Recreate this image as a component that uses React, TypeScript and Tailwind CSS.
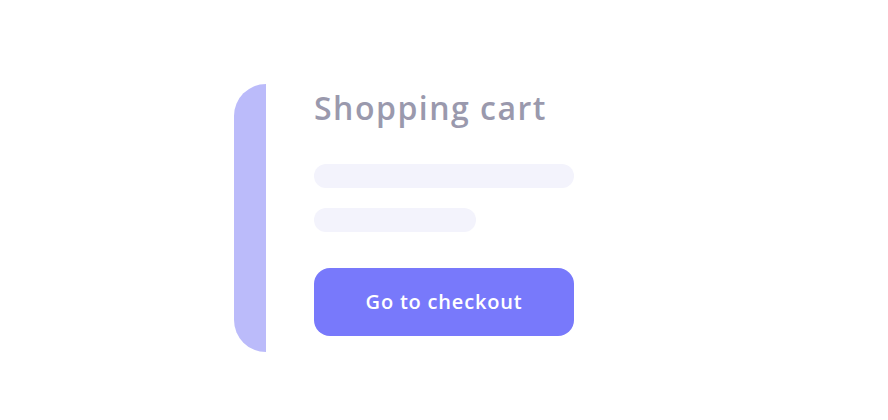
export default function App() {
  return (
    <div className="flex h-[420px] w-[888px] bg-white pl-[234px] pt-[84px] font-['Open_Sans',sans-serif]">
      {/* accent edge of the cart panel */}
      <div className="h-[268px] w-[32px] rounded-l-[32px] bg-[#bbbbfa]" />

      <div className="ml-[48px] flex w-[260px] flex-col">
        <h1 className="mt-[4px] text-[32px] leading-[40px] font-semibold tracking-[1.5px] text-[#9a99ad]">
          Shopping cart
        </h1>

        {/* line item placeholders */}
        <div className="mt-[36px] h-[24px] w-[260px] rounded-full bg-[#f3f3fc]" />
        <div className="mt-[20px] h-[24px] w-[162px] rounded-full bg-[#f3f3fc]" />

        <button
          type="button"
          className="mt-[36px] h-[68px] w-[260px] rounded-[16px] bg-[#7879fb] text-[20px] font-semibold tracking-[0.8px] text-white"
        >
          Go to checkout
        </button>
      </div>
    </div>
  );
}
